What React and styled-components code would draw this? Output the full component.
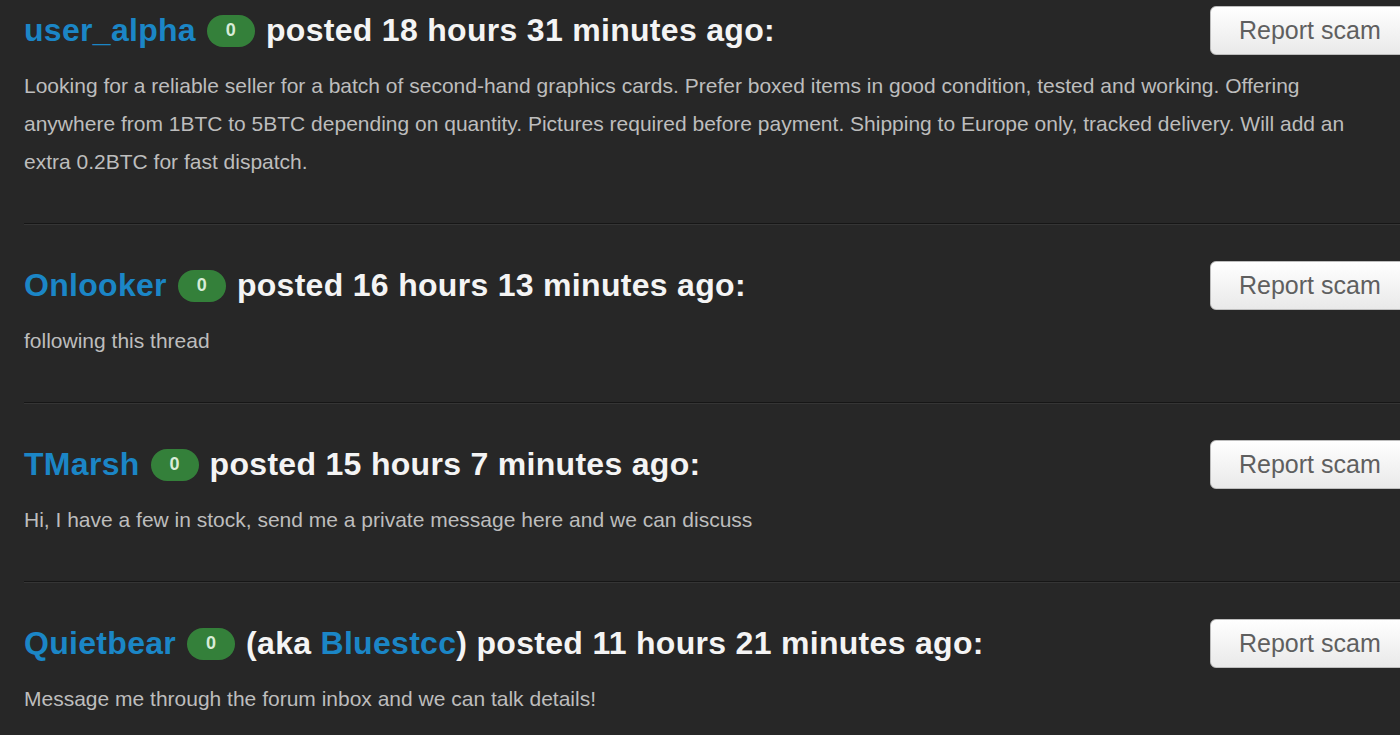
import React from 'react';
import styled, { createGlobalStyle } from 'styled-components';

const GlobalStyle = createGlobalStyle`
  html, body {
    margin: 0;
    padding: 0;
    background: #272727;
    overflow: hidden;
  }
  body {
    font-family: "Liberation Sans", Arial, sans-serif;
  }
`;

const Page = styled.div`
  width: 1400px;
  height: 735px;
  overflow: hidden;
  background: #272727;
`;

const PostList = styled.div`
  padding-left: 24px;
`;

const Post = styled.div`
  padding: 36px 0 42px;
  border-bottom: 1px solid #161616;
  box-shadow: 0 1px 0 #353535;
  margin-bottom: 1px;

  &:first-child {
    padding-top: 6px;
  }
`;

const Header = styled.div`
  display: flex;
  align-items: center;
  justify-content: space-between;
  height: 49px;
`;

const Title = styled.div`
  display: flex;
  align-items: center;
  gap: 11px;
  font-size: 32px;
  font-weight: bold;
  letter-spacing: 0.3px;
  color: #f4f4f4;
  white-space: nowrap;
`;

const Username = styled.a`
  color: #1b86c6;
  text-decoration: none;
`;

const Badge = styled.span`
  display: inline-flex;
  align-items: center;
  justify-content: center;
  width: 48px;
  height: 32px;
  border-radius: 16px;
  background: #34803a;
  color: #d8ecd8;
  font-size: 18px;
  font-weight: bold;
`;

const ReportButton = styled.button`
  width: 200px;
  height: 49px;
  margin-right: -10px;
  border: 1px solid #bdbdbd;
  border-radius: 6px;
  background: linear-gradient(#ffffff, #e9e9e9);
  color: #5f5f5f;
  font-family: "Liberation Sans", Arial, sans-serif;
  font-size: 25px;
  text-align: left;
  padding-left: 28px;
  cursor: pointer;
`;

const Body = styled.p`
  margin: 12px 0 0;
  max-width: 1350px;
  color: #bdbdbd;
  font-size: 21px;
  line-height: 38px;
`;

const posts = [
  {
    user: 'user_alpha',
    time: '18 hours 31 minutes',
    body:
      'Looking for a reliable seller for a batch of second-hand graphics cards. Prefer boxed items in good condition, tested and working. Offering anywhere from 1BTC to 5BTC depending on quantity. Pictures required before payment. Shipping to Europe only, tracked delivery. Will add an extra 0.2BTC for fast dispatch.',
  },
  { user: 'Onlooker', time: '16 hours 13 minutes', body: 'following this thread' },
  {
    user: 'TMarsh',
    time: '15 hours 7 minutes',
    body: 'Hi, I have a few in stock, send me a private message here and we can discuss',
  },
  {
    user: 'Quietbear',
    aka: 'Bluestcc',
    time: '11 hours 21 minutes',
    body: 'Message me through the forum inbox and we can talk details!',
  },
];

const App = () => (
  <Page>
    <GlobalStyle />
    <PostList>
      {posts.map((p) => (
        <Post key={p.user}>
          <Header>
            <Title>
              <Username href="#">{p.user}</Username>
              <Badge>0</Badge>
              <span>
                {p.aka && (
                  <>
                    (aka <Username href="#">{p.aka}</Username>){' '}
                  </>
                )}
                posted {p.time} ago:
              </span>
            </Title>
            <ReportButton>Report scam</ReportButton>
          </Header>
          <Body>{p.body}</Body>
        </Post>
      ))}
    </PostList>
  </Page>
);

export default App;
